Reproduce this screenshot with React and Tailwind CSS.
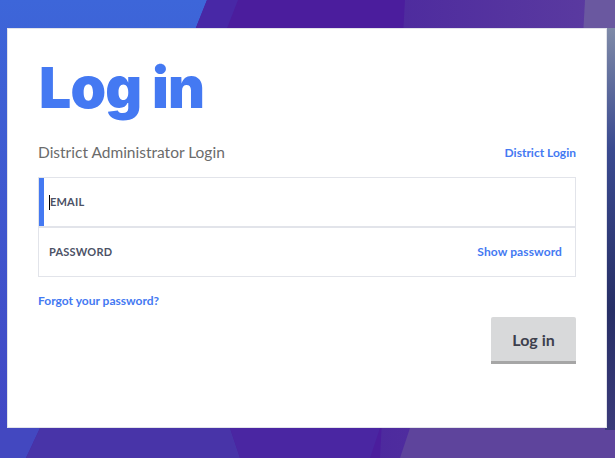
export default function App() {
  return (
    <div
      className="relative w-[615px] h-[458px] overflow-hidden bg-[#4a25a6]"
      style={{ fontFamily: "Lato, 'Noto Sans', sans-serif" }}
    >
      <svg className="absolute inset-0" width="615" height="458" viewBox="0 0 615 458">
        <defs>
          <linearGradient id="lft" x1="0" y1="0" x2="0" y2="1">
            <stop offset="0" stopColor="#3d66d9" />
            <stop offset="1" stopColor="#4145c2" />
          </linearGradient>
          <linearGradient id="rt" x1="0" y1="0" x2="1" y2="0">
            <stop offset="0" stopColor="#4d2a9e" />
            <stop offset="1" stopColor="#5a3aa0" />
          </linearGradient>
          <linearGradient id="edge" x1="0" y1="0" x2="0" y2="1">
            <stop offset="0" stopColor="#7f8aa8" />
            <stop offset="0.3" stopColor="#3a4a90" />
            <stop offset="0.7" stopColor="#272f66" />
            <stop offset="1" stopColor="#3a3a7a" />
          </linearGradient>
        </defs>
        <rect width="615" height="458" fill="#4b1d9d" />
        <polygon points="0,0 207,0 25,458 0,458" fill="url(#lft)" />
        <polygon points="207,0 238,0 60,458 25,458" fill="#4828a6" />
        <polygon points="405,0 590,0 590,458 380,458" fill="url(#rt)" />
        <polygon points="585,0 615,0 615,458 560,458" fill="#6a58a0" />
        <polygon points="0,428 40,428 26,458 0,458" fill="#4348c0" />
        <polygon points="40,428 230,428 240,458 26,458" fill="#4834a8" />
        <polygon points="230,428 380,428 370,458 240,458" fill="#4a26a2" />
        <polygon points="410,428 615,428 615,458 400,458" fill="#5e449c" />
        <rect x="605" y="28" width="10" height="402" fill="url(#edge)" />
      </svg>

      <div className="relative pt-[28px] pl-[7px]">
        <div className="w-[600px] h-[400px] bg-white border border-[#e2e3ea] pl-[30px] pr-[30px] pt-[22px]">
          <h1
            className="text-[57px] leading-[74px] font-black text-[#4479f2] tracking-[-0.8px] ml-[1px]"
            style={{ fontFamily: "Inter, sans-serif" }}
          >
            Log in
          </h1>
          <div className="flex items-center justify-between mt-[16px]">
            <span className="text-[15.5px] text-[#6b6b6b]">District Administrator Login</span>
            <span className="text-[12px] font-bold text-[#4479f2]">District Login</span>
          </div>

          <div className="mt-[13px] border border-[#e2e4ea]">
            <div className="flex items-center h-[48px] border-l-[5px] border-l-[#4479f2]">
              <span className="w-px h-[15px] bg-black ml-[5px]" />
              <span className="text-[11px] font-bold text-[#4c5266] tracking-[0.2px]">EMAIL</span>
            </div>
            <div className="h-[2px] bg-[#e2e4ea]" />
            <div className="flex items-center justify-between h-[48px] pl-[10px] pr-[13px]">
              <span className="text-[11px] font-bold text-[#4c5266] tracking-[0.2px]">PASSWORD</span>
              <span className="text-[12px] font-bold text-[#4479f2] tracking-[0.1px]">Show password</span>
            </div>
          </div>

          <div className="mt-[15px] text-[12px] font-bold text-[#4479f2]">Forgot your password?</div>

          <div className="flex justify-end mt-[7px]">
            <button className="w-[85px] h-[47px] bg-[#d8d9da] border-b-[3px] border-b-[#a6a6a6] rounded-t-[2px] text-[16px] font-bold text-[#3d404d] pt-[2px]">
              Log in
            </button>
          </div>
        </div>
      </div>
    </div>
  );
}
